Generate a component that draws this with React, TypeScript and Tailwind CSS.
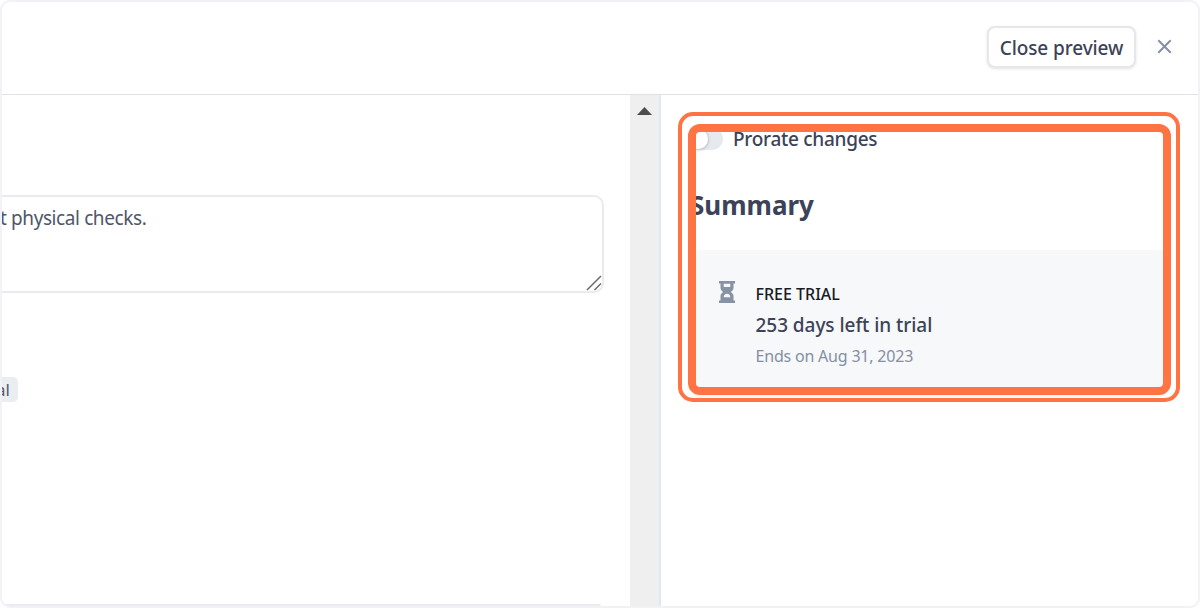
import type { ReactNode } from 'react';

function HourglassIcon() {
  return (
    <svg width="16" height="22" viewBox="0 0 16 22" className="shrink-0 text-[#8792a5]">
      <path
        fillRule="evenodd"
        fill="currentColor"
        d="M0 0h16v2.500h-1.500V7c0 1.700-1.300 2.900-2.800 4 1.500 1.100 2.800 2.300 2.800 4v4.500H16V22H0v-2.500h1.500V15c0-1.700 1.300-2.900 2.800-4-1.500-1.100-2.800-2.300-2.800-4V2.500H0zM4.700 2.800V6h6.600V2.800zM8 12.800c-2 0-3.300 1.400-3.300 3.400h6.600c0-2-1.300-3.400-3.300-3.400z"
      />
    </svg>
  );
}

function Header() {
  return (
    <header className="flex h-[93px] shrink-0 items-start justify-end border-b border-[#dce2ea] pt-6 pr-[26px]">
      <button className="flex h-[42px] w-[149px] items-center justify-center rounded-lg border-2 border-[#e7e7e9] bg-white pt-[2px] text-[19px] font-medium tracking-[-0.1px] whitespace-nowrap text-[#3c4257] shadow-[0_1px_3px_rgba(60,66,87,0.14)]">
        Close preview
      </button>
      <button className="mt-[13px] ml-[21px]" aria-label="Close">
        <svg width="15" height="15" viewBox="0 0 15 15" className="text-[#858fa3]">
          <path d="M1.300 1.300l12.400 12.400M13.700 1.300L1.300 13.700" stroke="currentColor" strokeWidth="2" />
        </svg>
      </button>
    </header>
  );
}

function EditorPane() {
  return (
    <section className="flex w-[628px] shrink-0 flex-col overflow-hidden">
      <div className="relative mt-[100px] -ml-3 h-[98px] w-[614px] rounded-[10px] border-2 border-[#ebebed] pt-[7px] pl-[9px] text-[19px] leading-7 whitespace-nowrap text-[#50566a]">
        <span className="-ml-px tracking-[-0.4px]">t physical checks.</span>
        <svg width="16" height="16" viewBox="0 0 16 16" className="absolute right-0 bottom-0">
          <path d="M1 15L15 1M8.500 15L15 8.500" stroke="#6b6b6b" strokeWidth="1.500" />
        </svg>
      </div>
      <div className="mt-[84px] -ml-3 flex h-[25px] w-7 items-center justify-end rounded-[5px] bg-[#ebeef1] pr-[8px] text-[17px] text-[#545a6c]">
        al
      </div>
      <div className="mt-auto -ml-3 h-[2px] w-[611px] rounded-tr-lg border-t-2 border-[#ebebee]" />
    </section>
  );
}

function Scrollbar() {
  return (
    <div className="flex w-[29px] shrink-0 justify-center bg-[#efefef] pt-3">
      <svg width="15" height="8" viewBox="0 0 15 8">
        <path d="M0 8L7.500 0L15 8z" fill="#4d4d4d" />
      </svg>
    </div>
  );
}

function Highlight({ children }: { children: ReactNode }) {
  return (
    <div className="relative mt-[17px] ml-[17px] h-[290px] w-[502px] rounded-[15px] border-4 border-[#ff7442] p-[7px]">
      <div className="h-[275px] overflow-hidden rounded-xl">{children}</div>
      <div className="absolute top-[8px] left-[6px] h-[271px] w-[483px] rounded-xl border-8 border-[#ff7442]" />
    </div>
  );
}

function SummaryPane() {
  return (
    <aside className="flex-1 border-l-2 border-[#e2e8ef]">
      <Highlight>
        <div className="flex h-[32px] items-center gap-[10px]">
          <div className="-mt-px -ml-[2px] h-[22px] w-9 rounded-full bg-[#e6e9ed]">
            <div className="h-[22px] w-[22px] rounded-full border border-[#c9ced6] bg-white shadow-sm" />
          </div>
          <span className="text-[19px] font-medium tracking-[-0.28px] whitespace-nowrap text-[#3c4257]">
            Prorate changes
          </span>
        </div>
        <h2 className="mt-[32px] ml-px text-[26px] leading-9 font-bold text-[#3c4257]">Summary</h2>
        <div className="mt-[27px] flex h-[150px] bg-[#f6f8fa] pt-[31px] pl-[30px]">
          <HourglassIcon />
          <div className="-mt-px ml-[20.500px] whitespace-nowrap">
            <p className="text-[16px] leading-7 font-medium text-[#1a1b25]">FREE TRIAL</p>
            <p className="mt-px text-[19px] leading-8 font-medium tracking-[-0.05px] text-[#3c4257]">
              253 days left in trial
            </p>
            <p className="text-[16px] leading-[30px] tracking-[-0.2px] text-[#858fa3]">Ends on Aug 31, 2023</p>
          </div>
        </div>
      </Highlight>
    </aside>
  );
}

export default function App() {
  return (
    <div className="flex h-[608px] w-[1200px] flex-col overflow-hidden rounded-[10px] border-2 border-[#f1f1f7] bg-white font-['Noto_Sans','Open_Sans',sans-serif]">
      <Header />
      <main className="flex min-h-0 flex-1">
        <EditorPane />
        <Scrollbar />
        <SummaryPane />
      </main>
    </div>
  );
}
